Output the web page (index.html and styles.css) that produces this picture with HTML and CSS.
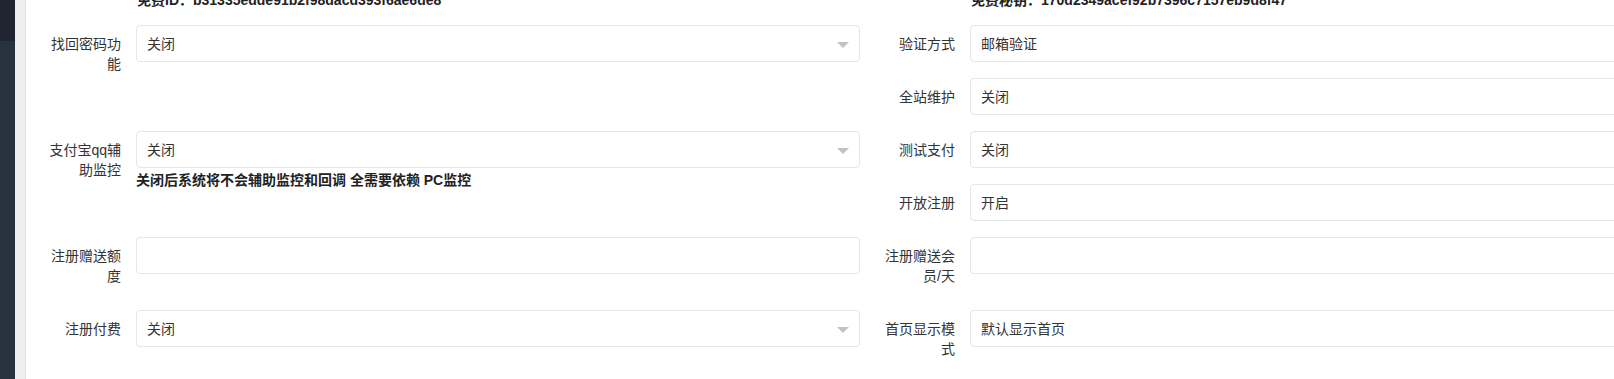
FILE: index.html
```html
<!DOCTYPE html>
<html lang="zh-CN">
<head>
    <meta charset="UTF-8">
    <meta name="viewport" content="width=device-width, initial-scale=1.0">
    <title>系统设置</title>
    <link rel="stylesheet" href="styles.css">
</head>
<body>

<div class="sidebar"></div>
<div class="gutter"></div>

<div class="content">
    <div class="keys">
        <div class="key"><span>免费ID：b31335edde91b2f98dacd393f6ae6de8</span></div>
        <div class="key"><span>免费秘钥：170d2349acef92b7396c7157eb9d8f47</span></div>
    </div>

    <div class="form">
        <div class="col">
            <div class="form-group gap-57">
                <label class="control-label">找回密码功能</label>
                <div class="control-wrap">
                    <div class="form-control select">关闭<span class="caret"></span></div>
                </div>
            </div>
            <div class="form-group gap-47">
                <label class="control-label">支付宝qq辅助监控</label>
                <div class="control-wrap">
                    <div class="form-control select">关闭<span class="caret"></span></div>
                    <div class="help-block">关闭后系统将不会辅助监控和回调 全需要依赖 PC监控</div>
                </div>
            </div>
            <div class="form-group gap-24">
                <label class="control-label">注册赠送额度</label>
                <div class="control-wrap">
                    <div class="form-control"></div>
                </div>
            </div>
            <div class="form-group">
                <label class="control-label">注册付费</label>
                <div class="control-wrap">
                    <div class="form-control select">关闭<span class="caret"></span></div>
                </div>
            </div>
        </div>

        <div class="col">
            <div class="form-group">
                <label class="control-label">验证方式</label>
                <div class="control-wrap">
                    <div class="form-control">邮箱验证</div>
                </div>
            </div>
            <div class="form-group">
                <label class="control-label">全站维护</label>
                <div class="control-wrap">
                    <div class="form-control">关闭</div>
                </div>
            </div>
            <div class="form-group">
                <label class="control-label">测试支付</label>
                <div class="control-wrap">
                    <div class="form-control">关闭</div>
                </div>
            </div>
            <div class="form-group">
                <label class="control-label">开放注册</label>
                <div class="control-wrap">
                    <div class="form-control">开启</div>
                </div>
            </div>
            <div class="form-group gap-24">
                <label class="control-label">注册赠送会员/天</label>
                <div class="control-wrap">
                    <div class="form-control"></div>
                </div>
            </div>
            <div class="form-group">
                <label class="control-label">首页显示模式</label>
                <div class="control-wrap">
                    <div class="form-control">默认显示首页</div>
                </div>
            </div>
        </div>
    </div>
</div>

</body>
</html>
```

FILE: styles.css
```css
html, body {
    overflow: hidden;
}
body {
    margin: 0;
    display: flex;
    height: 100vh;
    font-family: "Liberation Sans", "Noto Sans CJK SC", sans-serif;
    font-size: 14px;
    line-height: 20px;
    color: #333;
    background-color: #fff;
}
.sidebar {
    flex: 0 0 15px;
    background: linear-gradient(#1f2631 0, #1f2631 41px, #283340 41px);
}
.gutter {
    flex: 0 0 10px;
    background-color: #efefef;
    border-right: 1px solid #e2e2e2;
}
.content {
    flex: 0 0 1668px;
}
.keys {
    display: flex;
    height: 9px;
    overflow: hidden;
    margin-bottom: 16px;
}
.key {
    width: 834px;
    padding-left: 111px;
    box-sizing: border-box;
    display: flex;
    align-items: flex-end;
    font-weight: bold;
    color: #222;
}
.key span {
    line-height: 18px;
}
.form {
    display: flex;
}
.col {
    width: 834px;
}
.form-group {
    display: flex;
    align-items: flex-start;
    margin-bottom: 16px;
}
.form-group.gap-57 {
    margin-bottom: 57px;
}
.form-group.gap-47 {
    margin-bottom: 47px;
}
.form-group.gap-24 {
    margin-bottom: 24px;
}
.control-label {
    flex: 0 0 110px;
    box-sizing: border-box;
    padding: 9px 15px 0 17px;
    text-align: right;
    color: #333;
}
.control-wrap {
    width: 724px;
}
.form-control {
    box-sizing: border-box;
    height: 37px;
    padding: 8px 10px;
    border: 1px solid #e5e6e7;
    border-radius: 4px;
    background-color: #fff;
    color: #333;
}
.select {
    display: flex;
    justify-content: space-between;
    align-items: center;
    padding-top: 0;
    padding-bottom: 0;
}
.caret {
    width: 0;
    height: 0;
    border-left: 6px solid transparent;
    border-right: 6px solid transparent;
    border-top: 6px solid #c2c2c2;
    margin-top: 2px;
}
.help-block {
    margin-top: 2px;
    font-weight: bold;
    color: #222;
}
```
